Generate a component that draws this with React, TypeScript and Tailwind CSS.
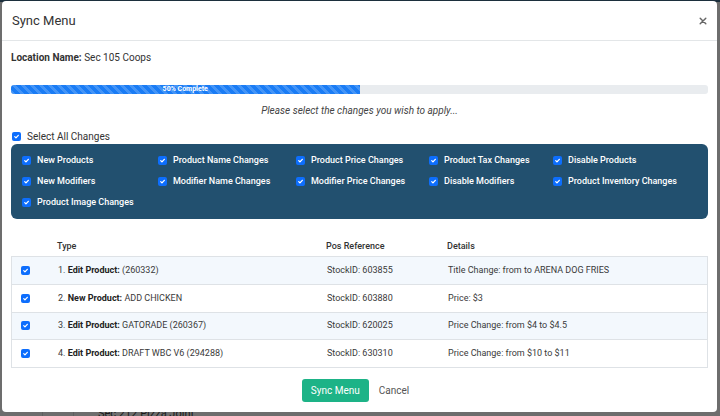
import React from "react";

const changeTypes = [
  "New Products",
  "Product Name Changes",
  "Product Price Changes",
  "Product Tax Changes",
  "Disable Products",
  "New Modifiers",
  "Modifier Name Changes",
  "Modifier Price Changes",
  "Disable Modifiers",
  "Product Inventory Changes",
  "Product Image Changes",
];

const rows = [
  { n: 1, kind: "Edit Product:", name: "(260332)", ref: "StockID: 603855", details: "Title Change: from to ARENA DOG FRIES" },
  { n: 2, kind: "New Product:", name: "ADD CHICKEN", ref: "StockID: 603880", details: "Price: $3" },
  { n: 3, kind: "Edit Product:", name: "GATORADE (260367)", ref: "StockID: 620025", details: "Price Change: from $4 to $4.5" },
  { n: 4, kind: "Edit Product:", name: "DRAFT WBC V6 (294288)", ref: "StockID: 630310", details: "Price Change: from $10 to $11" },
];

const Check = () => (
  <span className="flex h-[9px] w-[9px] shrink-0 items-center justify-center rounded-[2px] bg-[#0d6efd]">
    <svg viewBox="0 0 10 10" className="h-[7px] w-[7px]" fill="none" stroke="white" strokeWidth="1.8" strokeLinecap="round" strokeLinejoin="round">
      <path d="M2.5 5.2l1.7 1.7 3.4-3.6" />
    </svg>
  </span>
);

export default function App() {
  return (
    <div className="relative h-[416px] w-[720px] overflow-hidden bg-[#6d6d6d] font-['Roboto',sans-serif]">
      {/* dimmed page behind the modal */}
      <div className="h-[2px] w-full bg-[#1c2f3d]" />
      <div className="absolute left-[42px] top-[405px] h-[11px] w-px bg-[#5f5f5f]" />
      <div className="absolute left-[73px] top-[405px] h-[11px] w-px bg-[#5f5f5f]" />
      <div className="absolute left-[98px] top-[407px] text-[11px] leading-[13px] text-[#1a1a1a]">Sec 212 Pizza Joint</div>

      <div className="absolute left-[2px] top-[1px] flex h-[411px] w-[715px] flex-col rounded-[4px] bg-white">
        <div className="flex h-[40px] items-center justify-between border-b border-[#e3e6e8] pl-[10px] pr-[10px]">
          <span className="text-[13px] text-[#333]">Sync Menu</span>
          <svg viewBox="0 0 10 10" className="h-[8px] w-[8px]" stroke="#666" strokeWidth="1.8" strokeLinecap="round">
            <path d="M1.5 1.5l7 7M8.5 1.5l-7 7" />
          </svg>
        </div>

        <div className="flex flex-col px-[9px]">
          <div className="mt-[9px] text-[10px] text-[#333]">
            <span className="font-bold">Location Name:</span> Sec 105 Coops
          </div>

          <div className="mt-[20px] flex h-[9px] w-full overflow-hidden rounded-[3px] bg-[#e9ecef]">
            <div className="flex w-1/2 items-center justify-center bg-[#1a7cf5] bg-[linear-gradient(45deg,rgba(255,255,255,.18)_25%,transparent_25%,transparent_50%,rgba(255,255,255,.18)_50%,rgba(255,255,255,.18)_75%,transparent_75%,transparent)] bg-[length:9px_9px] text-[7px] font-bold leading-none text-white">
              50% Complete
            </div>
          </div>

          <div className="mt-[9px] text-center text-[10px] italic text-[#444]">
            Please select the changes you wish to apply...
          </div>

          <div className="mt-[11px] flex items-center gap-[6px] pl-[1px] text-[10px] text-[#333]">
            <Check />
            <span>Select All Changes</span>
          </div>

          <div className="grid h-[75px] grid-cols-[136px_138px_133px_124px_1fr] content-start gap-y-[8px] rounded-[6px] bg-[#22506f] px-[11px] pt-[10px]">
            {changeTypes.map((c) => (
              <div key={c} className="flex h-[13px] items-center gap-[6px] text-[9px] font-medium text-white">
                <Check />
                <span>{c}</span>
              </div>
            ))}
          </div>

          <div className="mt-[21px] grid grid-cols-[46px_269px_121px_1fr] text-[9px] font-medium text-[#333]">
            <div />
            <div>Type</div>
            <div>Pos Reference</div>
            <div>Details</div>
          </div>

          <div className="mt-[2px] flex flex-col border border-[#dee2e6]">
            {rows.map((r, i) => (
              <div
                key={r.n}
                className={`grid h-[27.5px] grid-cols-[46px_269px_121px_1fr] items-center text-[9px] text-[#3a3a3a] ${
                  i > 0 ? "border-t border-[#dee2e6]" : ""
                } ${i % 2 === 0 ? "bg-[#f3f8fd]" : "bg-white"}`}
              >
                <div className="pl-[9px]">
                  <Check />
                </div>
                <div>
                  {r.n}. <span className="font-bold text-[#222]">{r.kind}</span> {r.name}
                </div>
                <div>{r.ref}</div>
                <div>{r.details}</div>
              </div>
            ))}
          </div>

          <div className="mt-[11px] flex items-center justify-center gap-[10px] pr-[8px]">
            <button className="h-[23px] w-[67px] rounded-[3px] bg-[#1db387] text-[10px] text-white">Sync Menu</button>
            <span className="text-[10px] text-[#555]">Cancel</span>
          </div>
        </div>
      </div>
    </div>
  );
}
